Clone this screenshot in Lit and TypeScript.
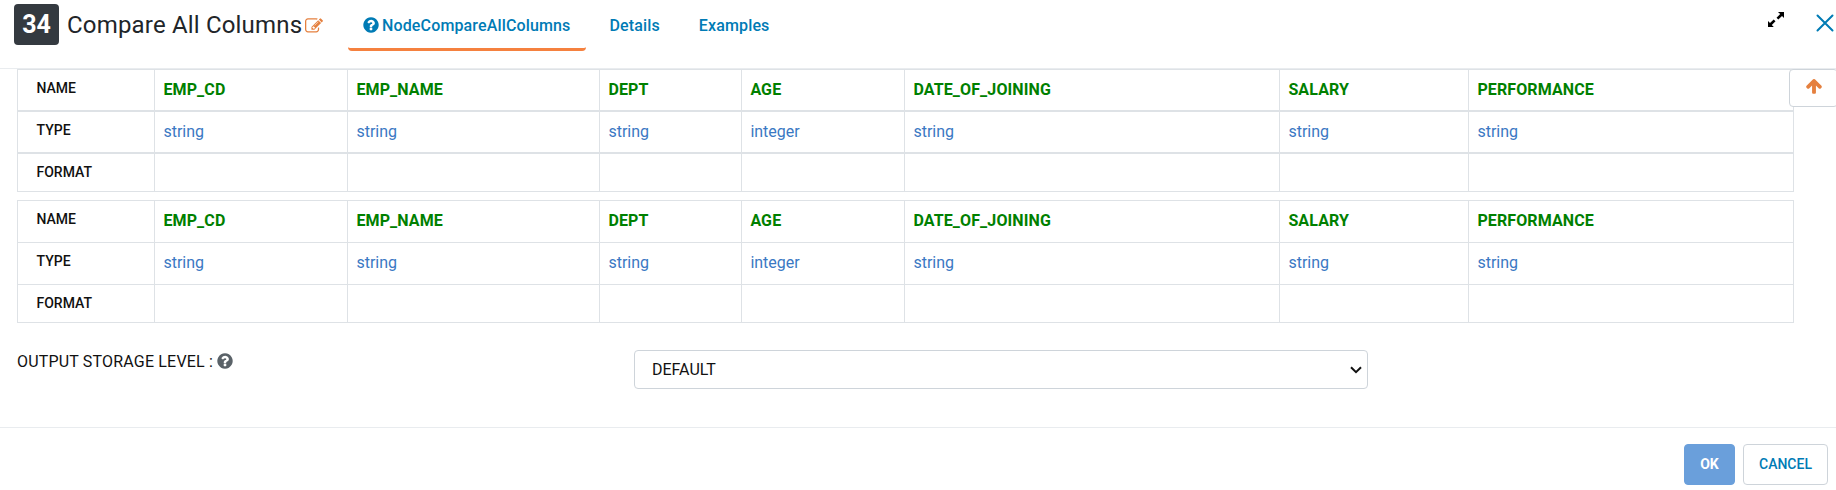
import { LitElement, html, css, svg } from "lit";
import { customElement, property } from "lit/decorators.js";

const QUESTION = "M1024 1376v-192q0-14-9-23t-23-9h-192q-14 0-23 9t-9 23v192q0 14 9 23t23 9h192q14 0 23-9t9-23zm256-672q0-88-55.5-163t-138.5-116-170-41q-243 0-371 213-15 24 8 42l132 100q7 6 19 6 16 0 25-12 53-68 86-92 34-24 86-24 48 0 85.5 26t37.5 59q0 38-20 61t-68 45q-63 28-115.5 86.5t-52.5 125.5v36q0 14 9 23t23 9h192q14 0 23-9t9-23q0-19 21.5-49.5t54.5-49.5q32-18 49-28.5t46-35 44.5-48 28-60.5 12.5-81zm384 192q0 209-103 385.5t-279.5 279.5-385.5 103-385.5-103-279.5-279.5-103-385.5 103-385.5 279.5-279.5 385.5-103 385.5 103 279.5 279.5 103 385.5z";
const EDIT = "M888 1184l116-116-152-152-116 116v56h96v96h56zm440-720q-16-16-33 1l-350 350q-17 17-1 33t33-1l350-350q17-17 1-33zm80 594v190q0 119-84.5 203.5t-203.5 84.5h-832q-119 0-203.5-84.5t-84.5-203.5v-832q0-119 84.5-203.5t203.5-84.5h832q63 0 117 25 15 7 18 23 3 17-9 29l-49 49q-14 14-32 8-23-6-45-6h-832q-66 0-113 47t-47 113v832q0 66 47 113t113 47h832q66 0 113-47t47-113v-126q0-13 9-22l64-64q15-15 35-7t20 29zm-96-738l288 288-672 672h-288v-288zm444 132l-92 92-288-288 92-92q28-28 68-28t68 28l152 152q28 28 28 68t-28 68z";
const ARROW_UP = "M1675 971q0 51-37 90l-75 75q-38 38-91 38-54 0-90-38l-294-293v704q0 52-37.5 84.5t-90.5 32.5h-128q-53 0-90.5-32.5t-37.5-84.5v-704l-294 293q-36 38-90 38t-90-38l-75-75q-38-38-38-90 0-53 38-91l651-651q35-37 90-37 54 0 91 37l651 651q37 39 37 91z";

const COLUMNS = [
  { name: "EMP_CD", type: "string" },
  { name: "EMP_NAME", type: "string" },
  { name: "DEPT", type: "string" },
  { name: "AGE", type: "integer" },
  { name: "DATE_OF_JOINING", type: "string" },
  { name: "SALARY", type: "string" },
  { name: "PERFORMANCE", type: "string" },
];

@customElement("schema-table")
class SchemaTable extends LitElement {
  @property({ type: Boolean, reflect: true }) heavy = false;

  static styles = css`
    :host { display: block; font: 400 16px/24px Roboto, sans-serif; }
    .table { display: grid; border: 1px solid #dee2e6; }
    .row {
      display: grid;
      box-sizing: border-box;
      height: 42px;
      grid-template-columns: 136px 193px 252px 142px 163px 375px 189px 1fr;
      border-bottom: 1px solid #dee2e6;
    }
    .row:last-child { height: 37px; border-bottom: 0; }
    :host([heavy]) .row { border-bottom-width: 2px; }
    :host([heavy]) .row:last-child { border-bottom-width: 0; }
    .cell { padding: 8px 0 0 8.4px; border-left: 1px solid #dee2e6; box-sizing: border-box; white-space: nowrap; }
    .cell:first-child { border-left: 0; }
    .cell.head { padding: 8px 0 0 18.5px; font-size: 14px; line-height: 21px; font-weight: 500; color: #111; }
    .name { color: #008000; font-weight: 700; letter-spacing: .12px; }
    .type { color: #3a78c3; }
  `;

  render() {
    return html`<div class="table">
      <div class="row"><div class="cell head">NAME</div>${COLUMNS.map((c) => html`<div class="cell name">${c.name}</div>`)}</div>
      <div class="row"><div class="cell head">TYPE</div>${COLUMNS.map((c) => html`<div class="cell type">${c.type}</div>`)}</div>
      <div class="row"><div class="cell head">FORMAT</div>${COLUMNS.map(() => html`<div class="cell"></div>`)}</div>
    </div>`;
  }
}

@customElement("app-root")
class AppRoot extends LitElement {
  static styles = css`
    :host {
      display: flex; flex-direction: column; position: relative; box-sizing: border-box;
      width: 100%; height: 490px; overflow: hidden; background: #fff; color: #212529;
      font: 400 16px/24px Roboto, sans-serif;
    }
    .glyph { display: block; fill: currentColor; flex: none; }
    header { display: flex; align-items: flex-start; box-sizing: border-box; height: 69px; flex: none; padding: 4px 2px 0 14px; border-bottom: 1px solid #e9ecef; }
    .badge { width: 45px; height: 41px; box-sizing: border-box; border-radius: 4px; background: #343a40; color: #fff; font-size: 25px; font-weight: 700; line-height: 42px; text-align: center; }
    .title { margin-left: 8px; font-size: 24px; line-height: 43px; letter-spacing: .18px; width: 238px; white-space: nowrap; }
    .edit { color: #e5803f; margin-top: 13px; }
    nav { display: flex; margin-left: 25px; height: 47px; }
    .tab { display: flex; align-items: flex-start; box-sizing: border-box; height: 47px; padding: 10px 0 0 23.5px; color: #007bb5; font-weight: 500; letter-spacing: .14px; white-space: nowrap; }
    .tab + .tab + .tab { padding-left: 39px; }
    .tab.active { width: 238px; padding: 10px 0 0 15px; border-bottom: 3px solid #f5813f; border-radius: 4px; }
    .tab.active .glyph { margin: 2px 3px 0 0; }
    .tools { display: flex; margin-left: auto; gap: 32px; }
    .expand { margin-top: 8px; color: #000; }
    .close { margin-top: 10px; }
    main { display: flex; flex-direction: column; box-sizing: border-box; height: 358px; flex: none; padding: 0 42px 0 17px; }
    .second { margin-top: 8px; }
    .up { position: absolute; left: 1789px; top: 69px; width: 49px; height: 38px; box-sizing: border-box; border: 1px solid #ced4da; border-radius: 4px; background: #fff; color: #e5803f; padding: 7px 0 0 15px; }
    .field { display: flex; margin-top: 27px; }
    .label { display: flex; width: 617px; color: #111; letter-spacing: .18px; white-space: nowrap; }
    .label .glyph { color: #5a6268; margin: 2px 0 0 4px; }
    .select { display: flex; justify-content: space-between; align-items: center; box-sizing: border-box; width: 734px; height: 39px; border: 1px solid #ced4da; border-radius: 4px; padding: 0 5px 0 17px; color: #111; }
    footer { display: flex; justify-content: flex-end; gap: 8px; box-sizing: border-box; flex: none; height: 63px; border-top: 1px solid #e9ecef; padding: 16px 8px 0; }
    .btn { box-sizing: border-box; height: 41px; border: 1px solid #ced4da; border-radius: 4px; font: 500 14px/39px Roboto, sans-serif; text-align: center; padding: 0; }
    .ok { width: 51px; background: #6a9fdb; border-color: #6a9fdb; color: #fff; font-weight: 700; }
    .cancel { width: 85px; background: #fff; color: #007bb5; }
  `;

  private glyph(path: string, size: number, cls = "", box = "0 0 1792 1792", width = size) {
    return html`<svg class="glyph ${cls}" width=${width} height=${size} viewBox=${box}>${svg`<path d=${path}></path>`}</svg>`;
  }

  render() {
    return html`
      <header>
        <div class="badge">34</div>
        <div class="title">Compare All Columns</div>
        ${this.glyph(EDIT, 18, "edit")}
        <nav>
          <div class="tab active">${this.glyph(QUESTION, 18, "", "128 0 1536 1792", 16)}<span>NodeCompareAllColumns</span></div>
          <div class="tab">Details</div>
          <div class="tab">Examples</div>
        </nav>
        <div class="tools">
          <svg class="glyph expand" width="16" height="15" viewBox="0 0 16 15">
            <path d="M10 0h6v6l-2-2-3.7 3.5-1.8-1.7L12.200 2.100zM0 15V9l2 2 3.700-3.500 1.800 1.700L3.800 12.900l2 2.100z"></path>
          </svg>
          <svg class="close" width="18" height="18" viewBox="0 0 18 18" fill="none" stroke="#007bb5" stroke-width="2" stroke-linecap="round">
            <path d="M1.500 1.500l15 15M16.500 1.500l-15 15"></path>
          </svg>
        </div>
      </header>
      <main>
        <schema-table heavy></schema-table>
        <schema-table class="second"></schema-table>
        <div class="field">
          <div class="label"><span>OUTPUT STORAGE LEVEL :</span>${this.glyph(QUESTION, 18, "", "128 0 1536 1792", 16)}</div>
          <div class="select"><span>DEFAULT</span>
            <svg width="12" height="8" viewBox="0 0 12 8" fill="none" stroke="#111" stroke-width="2"><path d="M1 1.200l5 5 5-5"></path></svg>
          </div>
        </div>
      </main>
      <footer>
        <button class="btn ok">OK</button>
        <button class="btn cancel">CANCEL</button>
      </footer>
      <div class="up">${this.glyph(ARROW_UP, 18)}</div>
    `;
  }
}
